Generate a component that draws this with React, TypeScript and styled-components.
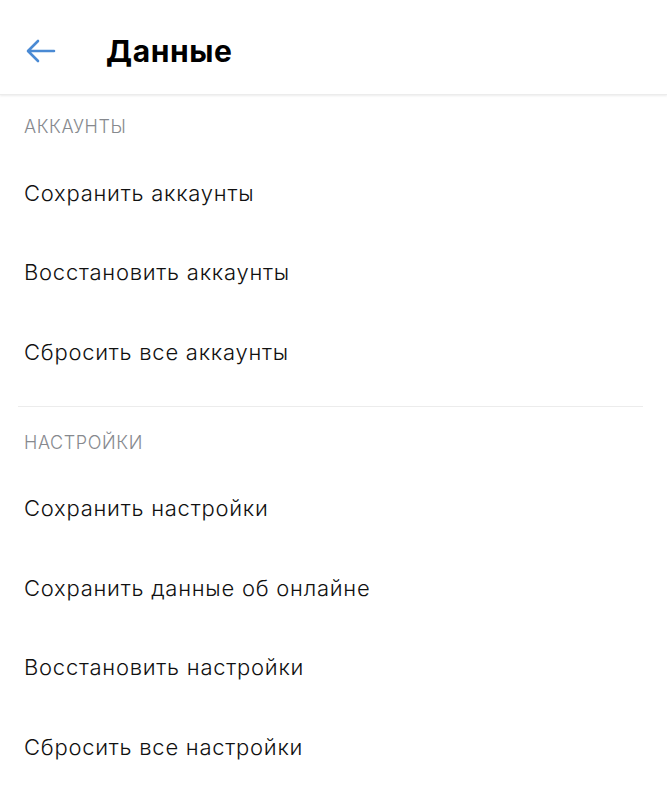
import styled, { createGlobalStyle } from "styled-components";

const GlobalStyle = createGlobalStyle`
  html, body {
    margin: 0;
    padding: 0;
    background: #ffffff;
  }

  body {
    font-family: "Inter", "Noto Sans", sans-serif;
    color: #000000;
  }
`;

/* ── LAYOUT ── */

const Page = styled.div`
  width: 667px;
  min-height: 800px;
  background: #ffffff;
`;

const Header = styled.header`
  height: 95px;
  padding-top: 8px;
  display: flex;
  align-items: center;
  box-shadow: 0 1px 2px rgba(0, 0, 0, 0.08);
  border-bottom: 1px solid #ececec;
  box-sizing: border-box;
`;

const BackButton = styled.button`
  width: 106px;
  height: 60px;
  padding: 0 0 0 26px;
  border: none;
  background: none;
  display: flex;
  align-items: center;
  cursor: pointer;
`;

const Title = styled.h1`
  margin: 0;
  font-size: 30px;
  font-weight: 700;
  letter-spacing: 0.6px;
  color: #000000;
`;

const SectionTitle = styled.div`
  padding: 22px 24px 16px;
  height: 20px;
  line-height: 20px;
  font-size: 18px;
  font-weight: 300;
  color: #86898e;
  letter-spacing: 0.6px;
`;

const Item = styled.div`
  height: 79.5px;
  display: flex;
  align-items: center;
  padding: 0 24px;
  font-size: 22px;
  font-weight: 300;
  color: #111111;
  letter-spacing: 0.75px;
`;

const Divider = styled.hr`
  margin: 14px 24px 4px 18px;
  border: none;
  border-top: 1px solid #ececec;
`;

/* ── DATA ── */

const sections = [
  {
    title: "АККАУНТЫ",
    items: ["Сохранить аккаунты", "Восстановить аккаунты", "Сбросить все аккаунты"],
  },
  {
    title: "НАСТРОЙКИ",
    items: [
      "Сохранить настройки",
      "Сохранить данные об онлайне",
      "Восстановить настройки",
      "Сбросить все настройки",
    ],
  },
];

/* ── COMPONENT ── */

function App() {
  return (
    <>
      <GlobalStyle />
      <Page>
        <Header>
          <BackButton aria-label="Назад">
            <svg width="30" height="24" viewBox="0 0 30 24" fill="none">
              <path
                d="M28 12H3M12 2L2 12l10 10"
                stroke="#4a8ad4"
                strokeWidth="2.6"
                strokeLinecap="round"
                strokeLinejoin="round"
              />
            </svg>
          </BackButton>
          <Title>Данные</Title>
        </Header>

        {sections.map((section, index) => (
          <div key={section.title}>
            {index > 0 && <Divider />}
            <SectionTitle>{section.title}</SectionTitle>
            {section.items.map((item) => (
              <Item key={item}>{item}</Item>
            ))}
          </div>
        ))}
      </Page>
    </>
  );
}

export default App;
